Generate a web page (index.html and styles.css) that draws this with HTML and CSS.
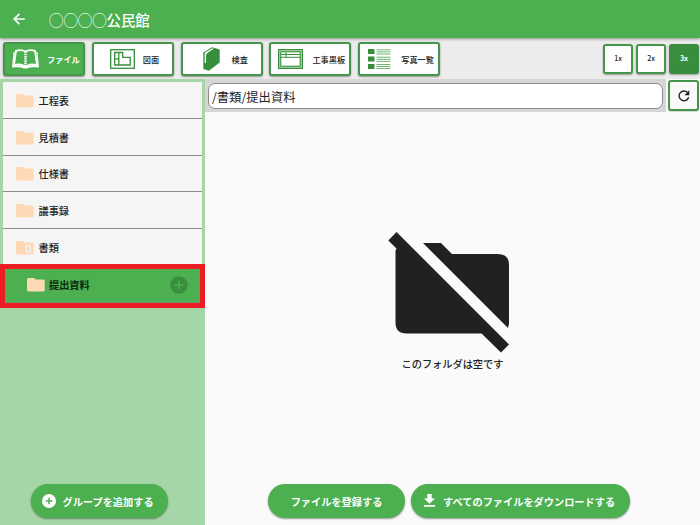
FILE: index.html
```html
<!DOCTYPE html>
<html lang="ja">
<head>
<meta charset="utf-8">
<title>公民館</title>
<link rel="stylesheet" href="styles.css">
</head>
<body>
<svg class="defs" width="0" height="0">
  <symbol id="folder" viewBox="0 0 18 14"><path d="M1.500 0H7l1.800 1.600h7.400q1.500 0 1.500 1.500v9q0 1.500-1.500 1.500H1.500Q0 13.600 0 12.100v-10.600Q0 0 1.500 0z" fill="#ffd9b5"/></symbol>
</svg>
<header class="appbar">
  <svg class="back" viewBox="0 0 12 12"><path d="M11.800 6H1.300M6.400.8L1.200 6l5.200 5.200" fill="none" stroke="#fff" stroke-width="1.700"/></svg>
  <h1>◯◯◯◯公民館</h1>
</header>
<nav class="toolbar">
  <button class="tab active">
    <svg width="27" height="20" viewBox="0 0 27 20"><path d="M4 1.800Q9.500 0 13.500 2.600 17.500 0 23 1.800L25 16.200Q18 14.500 15 17h-3Q9 14.500 2 16.200z" fill="none" stroke="#fff" stroke-width="1.800"/><path d="M2.800 3H1.500L0 18.600q8-1 12 .9h3q4-1.900 12-.9L25.500 3h-1.300l1.500 13.600q-7-1-11 .9h-2.400q-4-1.900-11-.9z" fill="#fff"/><path d="M13.500 2.500V17" stroke="#fff" stroke-width="2.400" stroke-dasharray="1.500 .7"/></svg>
    <span>ファイル</span>
  </button>
  <button class="tab plan">
    <svg width="25" height="20" viewBox="0 0 25 20" fill="none" stroke="#388e3c"><rect x=".7" y=".7" width="23.600" height="18.600" stroke-width="1.300"/><path d="M4.700 3.500h8v4.800h7.500v7.700H4.700zM4.700 9.800h4.500M8.800 3.500v12.500" stroke-width="1.300"/></svg>
    <span>図面</span>
  </button>
  <button class="tab inspect">
    <svg width="17" height="24" viewBox="0 0 17 24"><path d="M.3 5.500L9 .3 16.700 2.600v12.900L6 23.700.3 22z" fill="#388e3c"/><path d="M2 5.600L9.500 1.300l1.200.4L4 6.200q-1 1-1 3v7l-1.300-.4V7z" fill="#fff"/></svg>
    <span>検査</span>
  </button>
  <button class="tab wide">
    <svg width="25" height="20" viewBox="0 0 25 20" fill="none" stroke="#388e3c"><rect x=".5" y=".5" width="24" height="19" fill="#9bcb9d"/><rect x="2.800" y="2.800" width="19.400" height="14.400" fill="#fff"/><path d="M3 5.500h19M3 8.300h19M8 3v5.300" stroke-width="1"/></svg>
    <span>工事黒板</span>
  </button>
  <button class="tab wide">
    <svg width="25" height="20" viewBox="0 0 25 20"><path d="M1 0h6.500v5H1zM1 7.500h6.500v5H1zM1 15h6.500v5H1z" fill="#388e3c"/><path d="M9.500 .8h14M9.500 2.900h14M9.500 5h14M9.500 8.200h14M9.500 10.300h14M9.500 12.400h14M9.500 15.500h14M9.500 17.500h14M9.500 19.500h14" stroke="#6fb573" stroke-width="1"/></svg>
    <span>写真一覧</span>
  </button>
  <div class="scales">
    <button class="scale">1x</button>
    <button class="scale">2x</button>
    <button class="scale on">3x</button>
  </div>
</nav>
<div class="content">
  <aside class="side">
    <ul class="tree">
      <li><svg class="fold"><use href="#folder"/></svg>工程表</li>
      <li><svg class="fold"><use href="#folder"/></svg>見積書</li>
      <li><svg class="fold"><use href="#folder"/></svg>仕様書</li>
      <li><svg class="fold"><use href="#folder"/></svg>議事録</li>
      <li><svg class="fold" viewBox="0 0 18 14"><use href="#folder"/><path d="M10.300 4.700h2.600l1.600 1.600v4.600h-4.200z" fill="none" stroke="#f5f5f5" stroke-width="1.200"/></svg>書類</li>
    </ul>
    <div class="marked">
      <div class="selected">
        <svg class="fold"><use href="#folder"/></svg><span>提出資料</span>
        <svg class="plus" viewBox="0 0 18 18"><circle cx="9" cy="9" r="8.800" fill="#3a8f3e"/><path d="M9 4.700v8.600M4.700 9h8.600" stroke="#4caf50" stroke-width="1.500"/></svg>
      </div>
    </div>
    <button class="pill group">
      <svg width="14" height="14" viewBox="0 0 14 14"><circle cx="7" cy="7" r="7" fill="#fff"/><path d="M7 3.700v6.600M3.700 7h6.600" stroke="#4caf50" stroke-width="1.500"/></svg>
      <span>グループを追加する</span>
    </button>
  </aside>
  <main class="main">
    <div class="pathrow">
      <div class="pathbar"><div class="path">/書類/提出資料</div></div>
      <button class="reload"><svg width="12" height="12" viewBox="0 0 12 12"><path d="M9.700 2.600A4.900 4.900 0 1 0 10.700 7.300" fill="none" stroke="#222" stroke-width="1.400"/><path d="M11.300.3v4.900H6.400z" fill="#222"/></svg></button>
    </div>
    <div class="empty">
      <svg width="122" height="122" viewBox="0 0 122 122" fill="#212121"><path d="M8.500 0L121 112.500 113 120.500 93.500 101.500H18.500Q7.500 101.500 7.500 90.500V18.500L8.500 16.500 .3 8.500z"/><path d="M35 11H53L64 22H109.500Q121 22 121 33V92L120 96z"/></svg>
      <p>このフォルダは空です</p>
    </div>
    <div class="actions">
      <button class="pill register"><span>ファイルを登録する</span></button>
      <button class="pill download">
        <svg width="11" height="13" viewBox="0 0 11 13"><path d="M3.300 0h4.400v4.500H11L5.500 9.800 0 4.500h3.300zM0 11h11v1.700H0z" fill="#fff"/></svg>
        <span>すべてのファイルをダウンロードする</span>
      </button>
    </div>
  </main>
</div>
</body>
</html>
```
FILE: styles.css
```css
* { box-sizing: border-box; }
body {
  margin: 0;
  width: 700px;
  height: 525px;
  overflow: hidden;
  display: flex;
  flex-direction: column;
  background: #fafafa;
  color: #212121;
  font: 500 10.2px/1 "Noto Sans CJK JP", sans-serif;
}
.defs { position: absolute; }
button { font: inherit; color: inherit; margin: 0; padding: 0; border: 0; }
svg { flex: none; display: block; }

.appbar {
  flex: none;
  height: 38px;
  display: flex;
  align-items: center;
  padding-left: 13px;
  background: #4caf50;
  color: #fff;
  box-shadow: 0 1px 3px rgba(0, 0, 0, .4);
  z-index: 1;
}
.back { width: 12px; height: 12px; }
.appbar h1 { margin: 1px 0 0 24px; font-size: 14.4px; font-weight: 500; line-height: 20px; }

.toolbar {
  flex: none;
  height: 41px;
  display: flex;
  align-items: center;
  gap: 6.8px;
  padding: 0 1px 0 3px;
  background: #ececec;
}
.tab {
  width: 82px;
  height: 34px;
  display: flex;
  align-items: center;
  border: 2px solid #45964a;
  border-radius: 3px;
  background: #fff;
  box-shadow: 0 1px 2px rgba(0, 0, 0, .4);
  font-size: 8.2px;
  white-space: nowrap;
}
.tab span { margin: 2px 0 0 8px; }
.tab.active { background: #4caf50; color: #fff; font-weight: 700; }
.tab.active svg { margin-left: 7px; }
.plan svg { margin-left: 16px; }
.inspect svg { margin-left: 20px; }
.inspect span { margin-left: 12px; }
.wide svg { margin-left: 7px; }
.wide span { margin-left: 9px; }

.scales { margin-left: auto; display: flex; gap: 3px; }
.scale {
  width: 30px;
  height: 30px;
  border: 2px solid #45964a;
  border-radius: 3px;
  background: #fff;
  box-shadow: 0 1px 2px rgba(0, 0, 0, .35);
  font-size: 7px;
}
.scale.on { background: #388e3c; border-color: #388e3c; color: #fff; font-weight: 700; }

.content { flex: 1; min-height: 0; display: flex; }
.side {
  width: 205px;
  display: flex;
  flex-direction: column;
  background: #a5d6a7;
}
.tree { list-style: none; margin: 3px 3px 0; padding: 0; height: 182px; overflow: hidden; }
.tree li {
  height: 36.8px;
  display: flex;
  align-items: center;
  gap: 5px;
  padding: 2px 0 0 12.5px;
  background: #f5f5f5;
  border-bottom: 1px solid #8c8c8c;
}
.fold { width: 18px; height: 14px; }
.marked { height: 44px; border: 5px solid #ed1c24; }
.selected {
  height: 34px;
  display: flex;
  align-items: center;
  gap: 4px;
  padding: 0 12px 0 22px;
  background: #4caf50;
  border-bottom: 1px solid #6f9470;
  font-weight: 700;
  color: #0d260e;
}
.selected .fold, .plus { margin-top: -2px; }
.plus { width: 18px; height: 18px; margin-left: auto; }

.pill {
  height: 34px;
  display: flex;
  align-items: center;
  border-radius: 17px;
  background: #4caf50;
  color: #fff;
  font-weight: 700;
  box-shadow: 0 1px 2px rgba(0, 0, 0, .4);
  white-space: nowrap;
}
.pill span { margin-top: 2px; }
.group { width: 137px; margin: auto 0 7px 30.5px; padding-left: 11px; gap: 7px; }

.main { flex: 1; display: flex; flex-direction: column; }
.pathrow { height: 33px; display: flex; }
.pathbar { width: 461px; padding: 4px 3px; background: #d6d6d6; }
.path {
  height: 26px;
  padding-left: 3px;
  border: 1px solid #8a8a8a;
  border-radius: 7px;
  background: #fff;
  font-size: 12.3px;
  font-weight: 400;
  line-height: 26px;
}
.reload {
  width: 31px;
  height: 31px;
  margin: 1px 0 0 2px;
  display: flex;
  align-items: center;
  justify-content: center;
  border: 2px solid #45964a;
  border-radius: 3px;
  background: #fafafa;
  box-shadow: 0 1px 1px rgba(0, 0, 0, .15);
}
.empty { display: flex; flex-direction: column; align-items: center; margin-top: 119.5px; }
.empty p { margin: 5px 0 0; }
.empty svg { margin-left: -7px; }
.actions { margin: auto 0 7px 63px; display: flex; gap: 6px; }
.register { width: 137px; justify-content: center; }
.download { width: 219px; padding-left: 13px; gap: 8px; }
.download svg { margin-top: -1px; }
```
